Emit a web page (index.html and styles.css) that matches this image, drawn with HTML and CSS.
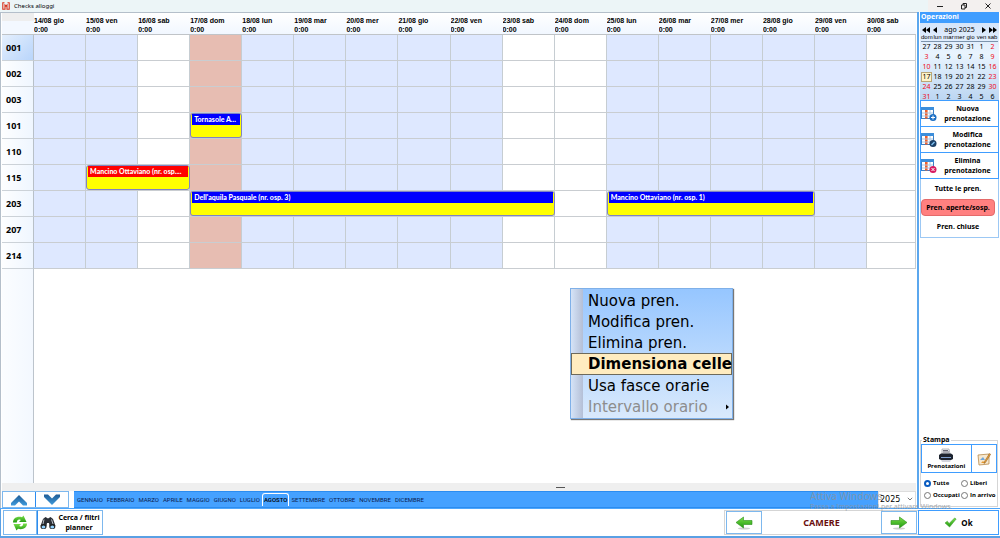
FILE: index.html
```html
<!DOCTYPE html>
<html lang="it">
<head>
<meta charset="utf-8">
<title>Checks alloggi</title>
<link rel="stylesheet" href="styles.css">
</head>
<body>
<svg class="defs" aria-hidden="true">
  <defs>
    <linearGradient id="gBlue" x1="0" y1="0" x2="0" y2="1"><stop offset="0" stop-color="#1f5c96"/><stop offset="1" stop-color="#3f9bdc"/></linearGradient>
    <linearGradient id="gGreen" x1="0" y1="0" x2="0" y2="1"><stop offset="0" stop-color="#7be04a"/><stop offset="1" stop-color="#219a10"/></linearGradient>
    <symbol id="sheet" viewBox="0 0 16 16">
      <rect x="0.5" y="1.5" width="12" height="11" fill="#fff" stroke="#3c7fc4"/>
      <rect x="0" y="1" width="13" height="3" fill="#3c8edb"/>
      <rect x="4" y="4" width="2.6" height="8.5" fill="#f0602c"/>
      <path d="M1 7h11M1 10h11M9 4v8" stroke="#a9c8e6" stroke-width="1"/>
    </symbol>
    <symbol id="arrow" viewBox="0 0 18 14">
      <ellipse cx="9" cy="12.500" rx="6" ry="1" fill="#cfcfcf"/>
      <path d="M1 4.500h8.500V1l7.500 5.500-7.500 5.500V8.500H1z" fill="url(#gGreen)" stroke="#2c8d1c" stroke-width=".6"/>
    </symbol>
  </defs>
</svg>

<header class="titlebar">
  <svg class="logo" viewBox="0 0 8 8"><path d="M2.500 .7H.8V7.300H3V3L4 4 5 3V7.300H7.200V.7H5.500" fill="none" stroke="#d8321e" stroke-width="1.100"/></svg>
  <h1>Checks alloggi</h1>
  <div class="wincontrols">
    <button type="button" aria-label="Riduci"><svg viewBox="0 0 8 8"><path d="M1 4.500h6" /></svg></button>
    <button type="button" aria-label="Ripristina"><svg viewBox="0 0 8 8"><path d="M1.500 3h3.500v4H1.500zM3 3V1.500h3.500V5.500H5" /></svg></button>
    <button type="button" aria-label="Chiudi"><svg viewBox="0 0 8 8"><path d="M1.500 1.500l5 5M6.500 1.500l-5 5" /></svg></button>
  </div>
</header>

<div class="workspace">
  <main class="planner">
    <div class="board">
      <table class="grid">
        <colgroup><col class="rooms"><col class="wk"><col class="wk"><col><col class="today"><col class="wk"><col class="wk"><col class="wk"><col class="wk"><col class="wk"><col><col><col class="wk"><col class="wk"><col class="wk"><col class="wk"><col class="wk"><col class="last"></colgroup>
        <thead>
          <tr><td></td><th>14/08 gio<br>0:00</th><th>15/08 ven<br>0:00</th><th>16/08 sab<br>0:00</th><th>17/08 dom<br>0:00</th><th>18/08 lun<br>0:00</th><th>19/08 mar<br>0:00</th><th>20/08 mer<br>0:00</th><th>21/08 gio<br>0:00</th><th>22/08 ven<br>0:00</th><th>23/08 sab<br>0:00</th><th>24/08 dom<br>0:00</th><th>25/08 lun<br>0:00</th><th>26/08 mar<br>0:00</th><th>27/08 mer<br>0:00</th><th>28/08 gio<br>0:00</th><th>29/08 ven<br>0:00</th><th>30/08 sab<br>0:00</th></tr>
        </thead>
        <tbody>
          <tr class="current"><th>001</th><td></td><td></td><td></td><td></td><td></td><td></td><td></td><td></td><td></td><td></td><td></td><td></td><td></td><td></td><td></td><td></td><td></td></tr>
          <tr><th>002</th><td></td><td></td><td></td><td></td><td></td><td></td><td></td><td></td><td></td><td></td><td></td><td></td><td></td><td></td><td></td><td></td><td></td></tr>
          <tr><th>003</th><td></td><td></td><td></td><td></td><td></td><td></td><td></td><td></td><td></td><td></td><td></td><td></td><td></td><td></td><td></td><td></td><td></td></tr>
          <tr><th>101</th><td></td><td></td><td></td><td><div class="booking span1"><span>Tornasole A...</span></div></td><td></td><td></td><td></td><td></td><td></td><td></td><td></td><td></td><td></td><td></td><td></td><td></td><td></td></tr>
          <tr><th>110</th><td></td><td></td><td></td><td></td><td></td><td></td><td></td><td></td><td></td><td></td><td></td><td></td><td></td><td></td><td></td><td></td><td></td></tr>
          <tr><th>115</th><td></td><td><div class="booking span2 pending"><span>Mancino Ottaviano (nr. osp....</span></div></td><td></td><td></td><td></td><td></td><td></td><td></td><td></td><td></td><td></td><td></td><td></td><td></td><td></td><td></td><td></td></tr>
          <tr><th>203</th><td></td><td></td><td></td><td><div class="booking span7"><span>Dell'aquila Pasquale (nr. osp. 3)</span></div></td><td></td><td></td><td></td><td></td><td></td><td></td><td></td><td><div class="booking span4"><span>Mancino Ottaviano (nr. osp. 1)</span></div></td><td></td><td></td><td></td><td></td><td></td></tr>
          <tr><th>207</th><td></td><td></td><td></td><td></td><td></td><td></td><td></td><td></td><td></td><td></td><td></td><td></td><td></td><td></td><td></td><td></td><td></td></tr>
          <tr><th>214</th><td></td><td></td><td></td><td></td><td></td><td></td><td></td><td></td><td></td><td></td><td></td><td></td><td></td><td></td><td></td><td></td><td></td></tr>
        </tbody>
      </table>
      <div class="rest"></div>
    </div>
    <div class="splitter"></div>
    <div class="monthbar">
      <div class="updown">
        <button type="button" aria-label="Su"><svg viewBox="0 0 18 12"><path d="M1 11.500V9L9 1l8 8v2.500h-4L9 7.500l-4 4z" fill="url(#gBlue)"/></svg></button>
        <button type="button" aria-label="Giù"><svg viewBox="0 0 18 12"><path d="M1 3V.5h4l4 4 4-4h4V3l-8 8z" fill="url(#gBlue)"/></svg></button>
      </div>
      <nav class="months">
        <button type="button">GENNAIO</button><button type="button">FEBBRAIO</button><button type="button">MARZO</button><button type="button">APRILE</button><button type="button">MAGGIO</button><button type="button">GIUGNO</button><button type="button">LUGLIO</button><button type="button" class="active">AGOSTO</button><button type="button">SETTEMBRE</button><button type="button">OTTOBRE</button><button type="button">NOVEMBRE</button><button type="button">DICEMBRE</button>
      </nav>
      <div class="year">
        <select aria-label="Anno"><option>2025</option></select>
        <svg viewBox="0 0 6 4"><path d="M.8.8L3 3 5.200.8" fill="none" stroke="#555" stroke-width=".8"/></svg>
      </div>
    </div>
  </main>

  <aside class="side">
    <h2>Operazioni</h2>
    <section class="calendar">
      <div class="calnav">
        <button type="button" aria-label="Anno precedente"><svg viewBox="0 0 8 6"><path d="M4 0v6L0 3zM8 0v6L4 3z"/></svg></button>
        <button type="button" aria-label="Mese precedente"><svg viewBox="0 0 8 6"><path d="M6 0v6L2 3z"/></svg></button>
        <span>ago 2025</span>
        <button type="button" aria-label="Mese successivo"><svg viewBox="0 0 8 6"><path d="M2 0v6l4-3z"/></svg></button>
        <button type="button" aria-label="Anno successivo"><svg viewBox="0 0 8 6"><path d="M0 0v6l4-3zM4 0v6l4-3z"/></svg></button>
      </div>
      <table>
        <thead><tr><th>dom</th><th>lun</th><th>mar</th><th>mer</th><th>gio</th><th>ven</th><th>sab</th></tr></thead>
        <tbody>
          <tr><td>27</td><td>28</td><td>29</td><td>30</td><td>31</td><td>1</td><td class="red">2</td></tr>
          <tr><td class="red">3</td><td>4</td><td>5</td><td>6</td><td>7</td><td>8</td><td class="red">9</td></tr>
          <tr><td class="red">10</td><td>11</td><td>12</td><td>13</td><td>14</td><td>15</td><td class="red">16</td></tr>
          <tr><td class="sel">17</td><td>18</td><td>19</td><td>20</td><td>21</td><td>22</td><td class="red">23</td></tr>
          <tr><td class="red">24</td><td>25</td><td>26</td><td>27</td><td>28</td><td>29</td><td class="red">30</td></tr>
          <tr><td class="red">31</td><td>1</td><td>2</td><td>3</td><td>4</td><td>5</td><td>6</td></tr>
        </tbody>
      </table>
    </section>
    <div class="actions">
      <button type="button"><svg viewBox="0 0 16 16"><use href="#sheet"/><circle cx="12" cy="11.500" r="3.500" fill="#1c6fc4"/><path d="M12 9.500v4M10 11.500h4" stroke="#fff"/></svg><span>Nuova<br>prenotazione</span></button>
      <button type="button"><svg viewBox="0 0 16 16"><use href="#sheet"/><circle cx="12" cy="11.500" r="3.500" fill="#1b3f66"/><path d="M10.500 13l3-3" stroke="#7fc0f0" stroke-width="1.500"/></svg><span>Modifica<br>prenotazione</span></button>
      <button type="button"><svg viewBox="0 0 16 16"><use href="#sheet"/><circle cx="12" cy="11.500" r="3.500" fill="#d81b60"/><path d="M10.500 10l3 3M13.500 10l-3 3" stroke="#fff"/></svg><span>Elimina<br>prenotazione</span></button>
    </div>
    <div class="filters">
      <button type="button">Tutte le pren.</button>
      <button type="button" class="on">Pren. aperte/sosp.</button>
      <button type="button">Pren. chiuse</button>
    </div>
    <fieldset class="print">
      <legend>Stampa</legend>
      <div class="printbtns">
        <button type="button" class="wide"><svg viewBox="0 0 16 14"><path d="M4 1h7l1 5H4z" fill="#eef2f6" stroke="#8a8f98" stroke-width=".6"/><path d="M5 2.500h5M5 4h6" stroke="#445" stroke-width=".8"/><path d="M1 7l2-1.500h10L15 7v4l-2 1H3l-2-1z" fill="#1d2430"/><path d="M3 9.500h10" stroke="#7fa0d0"/><path d="M3 12.500h10l-1 1H4z" fill="#aab"/></svg>Prenotazioni</button>
        <button type="button" aria-label="Modifica stampa"><svg viewBox="0 0 14 14"><path d="M1 3l11-1v10L2 13z" fill="#f7e8cf" stroke="#b98a4a" stroke-width=".8"/><path d="M3 8l3-3 2 3z" fill="#6fa6dc"/><path d="M4 11l2-2 2 2z" fill="#e89a30"/><path d="M12.500 1.500l-5 8-.5 2 1.600-1.200 5-8z" fill="#f0a63c" stroke="#7a4a12" stroke-width=".5"/></svg></button>
      </div>
      <div class="radios">
        <label><input type="radio" name="stato" checked>Tutte</label>
        <label><input type="radio" name="stato">Liberi</label>
        <label><input type="radio" name="stato">Occupati</label>
        <label><input type="radio" name="stato">In arrivo</label>
      </div>
    </fieldset>
  </aside>
</div>

<footer class="toolbar">
  <div class="left">
    <button type="button" class="refresh" aria-label="Aggiorna"><svg viewBox="0 0 16 16"><path d="M1 7.500C1 3 5.500 .8 10 2.300L11.500 .5 14.500 7H7l1.800-2C6.500 4 5 5 4.800 7.500z" fill="url(#gGreen)"/><path d="M15 8.500c0 4.500-4.500 6.700-9 5.200L4.500 15.500 1.500 9H9l-1.800 2c2.300 1 3.800 0 4-2.500z" fill="url(#gGreen)"/></svg></button>
    <button type="button" class="search"><svg viewBox="0 0 16 14"><path d="M3 3l2.500-2L8 2.500 10.500 1 13 3l2.500 7H9.500L9 7H7l-.5 3H.5z" fill="#2b2f36"/><path d="M4 3.500L3 8M11.500 3.500L13 8" stroke="#b9c0c8"/><ellipse cx="3.500" cy="10.500" rx="3" ry="2.600" fill="#222"/><ellipse cx="12.300" cy="10.500" rx="3" ry="2.600" fill="#222"/><ellipse cx="3.500" cy="11" rx="1.900" ry="1.600" fill="#8fd0ff"/><ellipse cx="12.300" cy="11" rx="1.900" ry="1.600" fill="#8fd0ff"/></svg><span>Cerca / filtri<br>planner</span></button>
  </div>
  <div class="pager">
    <button type="button" aria-label="Precedente"><svg class="flip" viewBox="0 0 18 14"><use href="#arrow"/></svg></button>
    <strong>CAMERE</strong>
    <button type="button" aria-label="Successivo"><svg viewBox="0 0 18 14"><use href="#arrow"/></svg></button>
  </div>
  <button type="button" class="ok"><svg viewBox="0 0 14 12"><path d="M1 6.500L3.500 4.500 5.500 7 11.500 1l1.700 1.200L6 11z" fill="url(#gGreen)" stroke="#2c8d1c" stroke-width=".5"/></svg>Ok</button>
</footer>

<div class="menu" role="menu">
  <button type="button" role="menuitem">Nuova pren.</button>
  <button type="button" role="menuitem">Modifica pren.</button>
  <button type="button" role="menuitem">Elimina pren.</button>
  <button type="button" role="menuitem" class="hot">Dimensiona celle</button>
  <button type="button" role="menuitem">Usa fasce orarie</button>
  <button type="button" role="menuitem" disabled>Intervallo orario<svg viewBox="0 0 4 6"><path d="M1 .5v5L4 3z"/></svg></button>
</div>

<div class="activation"><b>Attiva Windows</b><span>Passa a Impostazioni per attivare Windows.</span></div>
</body>
</html>
```

FILE: styles.css
```css
* { box-sizing: border-box; }

body {
  margin: 0;
  min-height: 100vh;
  display: flex;
  flex-direction: column;
  position: relative;
  background: #fff;
  color: #000;
  font: 7px/10px "Noto Sans", "Open Sans", sans-serif;
  overflow: hidden;
}

button {
  font: inherit;
  color: inherit;
  margin: 0;
  padding: 0;
  border: 0;
  background: none;
}

svg { display: block; flex: none; }
.defs { position: absolute; width: 0; height: 0; }

/* title bar */
.titlebar {
  height: 12px;
  display: flex;
  align-items: center;
  gap: 4px;
  padding-left: 2px;
  background: #ecf5f7;
}
.logo { width: 8px; height: 8px; }
.titlebar h1 { margin: 0; flex: 1; font-size: 6px; font-weight: 400; }
.wincontrols { display: flex; background: #f3f0ef; }
.wincontrols button { width: 24px; height: 12px; display: grid; place-items: center; }
.wincontrols svg { width: 8px; height: 8px; }
.wincontrols path { fill: none; stroke: #222; stroke-width: 1; }

/* main area */
.workspace { flex: 1; display: flex; min-height: 0; border-bottom: 1px solid #4ea6fb; }
.planner {
  flex: 1;
  min-width: 0;
  display: flex;
  flex-direction: column;
  padding: 0 1px;
  border: 1px solid #b4bfca;
  border-width: 1px 0 0 1px;
}
.board { flex: 1; display: flex; flex-direction: column; }
.rest {
  flex: 1;
  width: 32px;
  border-right: 1px solid #bcc4cc;
  background: linear-gradient(90deg, #fbfdff, #f3f8ff);
}

.grid { width: 100%; table-layout: fixed; border-collapse: separate; border-spacing: 0; }
.grid .rooms { width: 32px; }
.grid .last { width: 49px; }
.grid .wk { background: #dee8ff; }
.grid .today { background: #e7bdb2; }
.grid thead th, .grid thead td {
  height: 22px;
  padding: 2px 0 0 0;
  border-bottom: 1px solid #c0c4c8;
  background: linear-gradient(#fff, #f1f7ff);
  font: bold 7px/9px "Liberation Sans", Arial, sans-serif;
  text-align: left;
  white-space: nowrap;
  overflow: hidden;
}
.grid thead td { background: linear-gradient(#eee 8px, #f3f8ff 8px); }
.grid tbody th {
  height: 26px;
  padding: 0 0 0 4px;
  border-right: 1px solid #b8c0c8;
  border-bottom: 1px solid #ccd2d8;
  background: linear-gradient(90deg, #fdfeff, #eff6ff);
  font: bold 9px/12px "Noto Sans", sans-serif;
  text-align: left;
}
.grid .current th { background: linear-gradient(135deg, #e4effd, #b9d5fb); }
.grid tbody td {
  position: relative;
  height: 26px;
  padding: 0;
  border-right: 1px solid #c6cdd2;
  border-bottom: 1px solid #c9cdd1;
}

/* bookings lie over the cells they span */
.booking {
  position: absolute;
  z-index: 1;
  top: 0;
  left: 0;
  height: 25px;
  padding: 0 1px;
  border: 1px solid #7f83c4;
  border-radius: 3px;
  background: #ff0;
}
.booking span {
  display: block;
  padding: 0 0 1px 2px;
  white-space: nowrap;
  background: #00f;
  color: #fff;
  font: 900 7px/10px Lato, sans-serif;
}
.pending span { background: #f00; }
.span1 { width: calc(100% + 1px); }
.span2 { width: calc(200% + 2px); }
.span4 { width: calc(400% + 4px); }
.span7 { width: calc(700% + 7px); }

.splitter { height: 8px; background: #efefef; display: grid; place-items: center; padding-left: 202px; }
.splitter::after { content: ""; width: 9px; height: 1px; background: #555; }

.monthbar { display: flex; height: 17px; }
.updown { display: flex; width: 67px; margin-right: 5px; border: 1px solid #7db8ee; }
.updown button { flex: 1; display: grid; place-items: center; }
.updown button + button { border-left: 1px solid #2b8cf0; }
.updown svg { width: 18px; height: 12px; }
.months {
  flex: 1;
  display: flex;
  align-items: center;
  padding-left: 1px;
  background: #45a1ff;
  border: solid #2b8cf0;
  border-width: 1px 0;
}
.months button { padding: 1px; font: 6px/10px Roboto, sans-serif; color: #0a1c50; border: 1px solid transparent; border-bottom: 0; }
.months .active { border-color: #fff; border-radius: 3px 3px 0 0; color: #000; font-weight: 500; }
.year { position: relative; width: 38px; }
.year select {
  width: 100%;
  height: 100%;
  padding: 0 1px;
  border: 1px solid #ddd;
  appearance: none;
  background: #fff;
  font: 8px/12px "DejaVu Sans", sans-serif;
  color: #000;
}
.year svg { position: absolute; right: 3px; top: 6px; width: 6px; height: 4px; }

/* sidebar */
.side {
  width: 83px;
  display: flex;
  flex-direction: column;
  border-left: 2px solid #5ba7ee;
  padding: 0 1px 1px;
}
.side h2 {
  margin: 0;
  padding-left: 1px;
  height: 11px;
  background: #3f9dff;
  color: #fff;
  font: bold 7px/10px "Noto Sans", sans-serif;
}
.calendar { padding: 2px 1px 0; height: 77px; background: linear-gradient(#d5e5fa, #e9f4fe 40%, #bcd6f2); }
.calnav { display: flex; align-items: center; gap: 1px; height: 9px; padding: 0 1px; }
.calnav button { width: 8px; height: 6px; }
.calnav svg { width: 8px; height: 6px; }
.calnav span { flex: 1; text-align: center; }
.calendar table { width: 100%; table-layout: fixed; border-collapse: collapse; }
.calendar th { padding: 0; height: 7px; font: 6px/6px "Liberation Sans", Arial, sans-serif; border-bottom: 1px solid #7d94ad; }
.calendar td { padding: 0; height: 10px; text-align: center; font: 7px/10px "Noto Sans", sans-serif; }
.calendar .red { color: #f00818; }
.calendar .sel { background: #fff3c8; outline: 1px solid #b9a676; outline-offset: -1px; }

.actions { display: flex; flex-direction: column; border-top: 1px solid #3f9dff; }
.actions button {
  height: 26px;
  display: flex;
  align-items: center;
  border: 1px solid #3f9dff;
  border-top: 0;
  background: #fff;
  font-weight: 700;
}
.actions svg { width: 16px; height: 16px; }
.actions span { flex: 1; text-align: center; }
.filters {
  display: flex;
  flex-direction: column;
  gap: 2px;
  padding: 1px 3px 2px 0;
  border: 1px solid #9cc8f4;
  border-top: 0;
}
.filters button { height: 17px; font-weight: 700; border-radius: 4px; white-space: nowrap; }
.filters .on { background: #ff8080; border: 1px solid #e46a6a; }

.print { margin: auto 1px 0 0; padding: 0; min-width: 0; border: 1px solid #d5d5d5; }
.print legend { margin-left: 1px; padding: 0 1px; font-weight: 700; line-height: 8px; }
.printbtns { display: flex; height: 29px; }
.printbtns button { flex: 1; display: grid; place-items: center; align-content: center; border: 1px solid #3f9dff; font: bold 6px/8px "Noto Sans", sans-serif; }
.printbtns button + button { border-left: 0; }
.printbtns .wide { flex: 2; }
.printbtns svg { width: 16px; height: 14px; }
.radios { display: grid; grid-template-columns: 37px 1fr; row-gap: 2px; padding: 5px 0 6px 3px; }
.radios label { display: flex; align-items: center; gap: 2px; font: bold 6px/10px "Open Sans", sans-serif; white-space: nowrap; }
.radios input { appearance: none; flex: none; width: 7px; height: 7px; margin: 0; border: 1px solid #777; border-radius: 50%; background: #fff; }
.radios input:checked { border: 2px solid #0a5cc0; }

/* bottom toolbar */
.toolbar {
  display: flex;
  height: 29px;
  padding: 1px 1px 1px 2px;
  border-bottom: 2px solid #5aa0e4;
  border-left: 1px solid #5aa0e4;
}
.toolbar button { display: flex; align-items: center; justify-content: center; border: 1px solid #7db8ee; background: #fff; font-weight: 700; }
.left { display: flex; flex: 1; }
.refresh { width: 34px; }
.search { width: 66px; gap: 2px; }
.left .search { border-left-color: #2b8cf0; }
.refresh svg { width: 16px; height: 16px; }
.search svg { width: 16px; height: 14px; }
.pager { display: flex; width: 194px; border: 1px solid #d5d5d5; border-right: 0; padding: 0 1px; }
.pager button { width: 36px; }
.pager svg { width: 18px; height: 14px; }
.flip { transform: scaleX(-1); }
.pager strong { flex: 1; display: grid; place-items: center; color: #6a0f0f; font: bold 9px/12px "Noto Sans", sans-serif; }
.toolbar .ok { width: 81px; gap: 4px; font-size: 8px; border-color: #3f9dff; }
.ok svg { width: 13px; height: 11px; }

/* context menu floats over the planner */
.menu {
  position: absolute;
  left: 570px;
  top: 288px;
  width: 163px;
  display: flex;
  flex-direction: column;
  padding: 1px 0;
  border: 1px solid #7fb0e8;
  background: linear-gradient(90deg, #d5e3f7, #b4bfd6 12px, transparent 12px), linear-gradient(#96c6ff, #d9e9fc);
  box-shadow: 1px 1px 1px #777;
}
.menu button {
  height: 21px;
  display: flex;
  align-items: center;
  justify-content: space-between;
  padding: 0 3px 0 17px;
  font: 15px/20px "DejaVu Sans", sans-serif;
  white-space: nowrap;
}
.menu .hot { height: 22px; padding: 0 0 0 16px; border: 1px solid #6d6a5c; background: #ffecc0; font-weight: 700; }
.menu button:disabled { color: #8d8d8d; }
.menu svg { width: 4px; height: 6px; }

/* operating system notice over the lower right corner */
.activation {
  position: absolute;
  right: 40px;
  bottom: 26px;
  width: 150px;
  display: flex;
  flex-direction: column;
  color: #8d9299;
  opacity: .75;
  white-space: nowrap;
  pointer-events: none;
}
.activation b { font-size: 10px; line-height: 12px; font-weight: 400; }
.activation span { font-size: 7px; line-height: 10px; }
```
